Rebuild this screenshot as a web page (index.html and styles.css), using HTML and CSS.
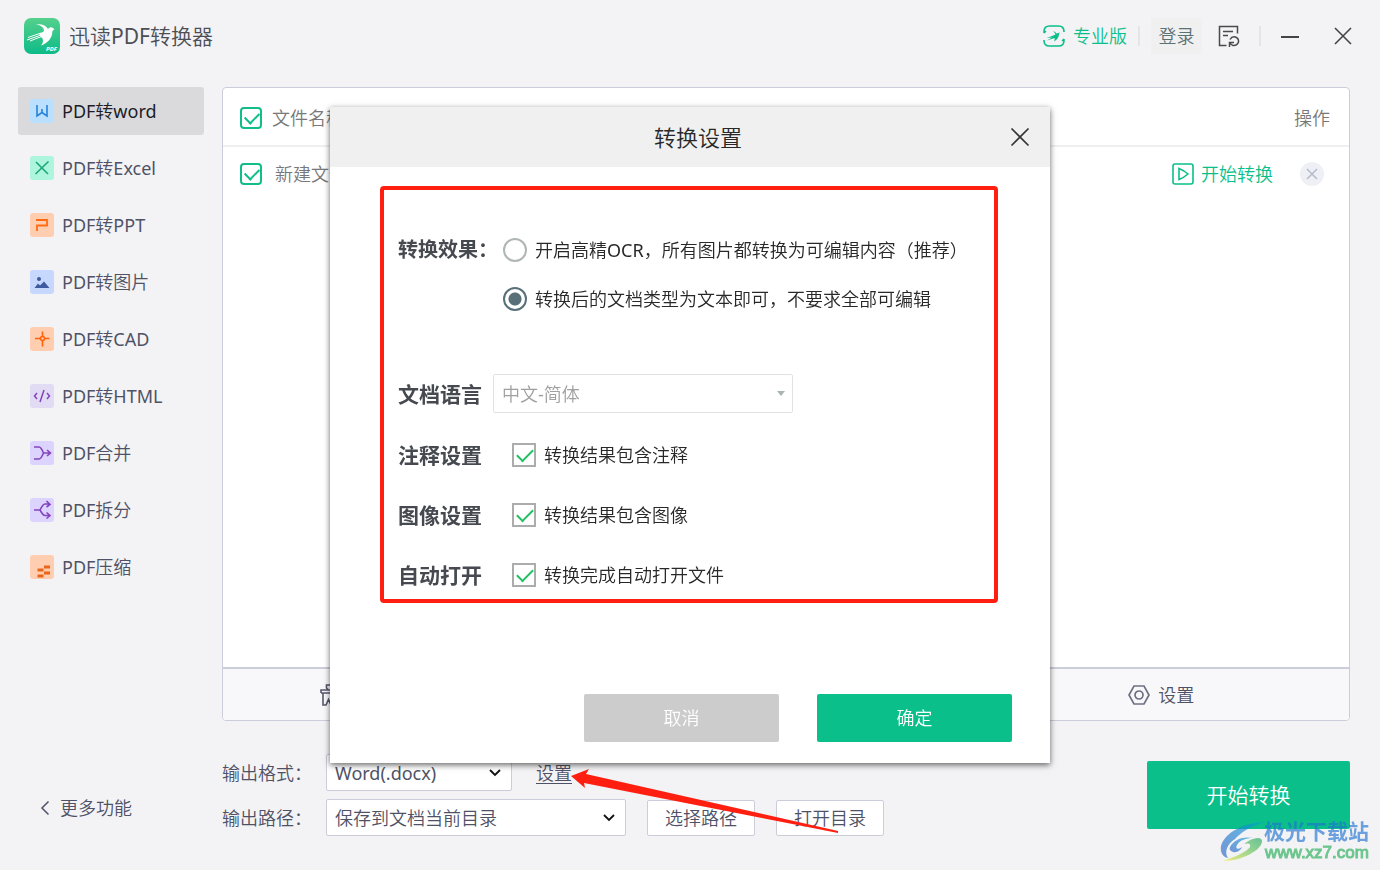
FILE: index.html
```html
<!DOCTYPE html>
<html lang="zh-CN">
<head>
<meta charset="utf-8">
<meta name="viewport" content="width=device-width, initial-scale=1">
<title>迅读PDF转换器</title>
<link rel="stylesheet" href="styles.css">
</head>
<body>
<div class="app">
  <header class="topbar">
    <svg class="logo" viewBox="0 0 36 36" aria-hidden="true">
      <defs><linearGradient id="lg" x1="0" y1="0" x2="0" y2="1"><stop offset="0" stop-color="#55d08c"/><stop offset="1" stop-color="#0dbb88"/></linearGradient></defs>
      <rect width="36" height="36" rx="7" fill="url(#lg)"/>
      <path fill="#fff" d="M12 6.500C17 5.500 22 7 24 11C26 8.500 28.500 9 30.500 11.500C28 12 28.500 14 28 16.500C27 21 23 25.500 17 27.500C19 25 19.500 23 18.500 20.500C16 18.500 15 17 15.500 15.500C17 14.500 18.500 14.500 20 13C20 9.500 17 7.200 12 6.500Z"/>
      <path fill="none" stroke="#fff" stroke-width="1" d="M17 15L4 19.500M17 17L3 22M17.500 18.500L6 23"/>
      <text x="22" y="33" class="logo-text">PDF</text>
    </svg>
    <h1 class="app-name">迅读PDF转换器</h1>
    <button class="pro" type="button">
      <svg width="22" height="22" viewBox="0 0 22 22" fill="none" stroke="#0abf8a" stroke-width="1.600" aria-hidden="true">
        <path d="M1 8V6.500Q1 1 6.500 1H15.500Q21 1 21 6.500V7M21 14V15.500Q21 21 15.500 21H6.500Q1 21 1 15.500V15M1 8L3 6M21 14L19 16"/>
        <path fill="#0abf8a" stroke="none" d="M10 6Q12.500 6.500 13.500 8.500L17 7.500L16 9Q16 13.500 11 16.500Q12 14.500 11.500 13L4 15.500L9 12.500L3.500 13L9 11L12.500 9.500Q12 7.500 10 6Z"/>
      </svg>
      专业版
    </button>
    <span class="divider divider-first"></span>
    <button class="login" type="button">登录</button>
    <button class="icon-button history" type="button" aria-label="转换记录">
      <svg width="24" height="24" viewBox="0 0 24 24" fill="none" stroke="#4a4a4a" stroke-width="1.500" aria-hidden="true">
        <path d="M9.500 21.500H2.500V2.500H20.500V9.500M6 7.500H16M6 11.500H11"/>
        <path d="M13 15.500Q15 12 18.500 13Q22 14.500 21.500 18Q20 22 16 21.500L13 19.500M17 18.500H12.500V23"/>
      </svg>
    </button>
    <span class="divider divider-last"></span>
    <button class="icon-button window-button" type="button" aria-label="最小化">
      <svg width="20" height="20" viewBox="0 0 20 20" stroke="#444" stroke-width="2" aria-hidden="true"><path d="M1 11H19"/></svg>
    </button>
    <button class="icon-button window-button close-app" type="button" aria-label="关闭">
      <svg width="20" height="20" viewBox="0 0 20 20" stroke="#444" stroke-width="1.600" aria-hidden="true"><path d="M2 2L18 18M18 2L2 18"/></svg>
    </button>
  </header>

  <div class="body">
    <nav class="sidebar">
      <a class="nav-item active" href="#word">
        <svg class="nav-icon" viewBox="0 0 24 24" aria-hidden="true"><rect width="24" height="24" rx="3" fill="#bbdfff"/><path d="M7 6V17L12 13.500L17 17V6M12 10V13" fill="none" stroke="#2683d9" stroke-width="1.600"/></svg>
        PDF转word
      </a>
      <a class="nav-item" href="#excel">
        <svg class="nav-icon" viewBox="0 0 24 24" aria-hidden="true"><rect width="24" height="24" rx="3" fill="#aef5dd"/><path d="M6 6L18 18M18.500 5.500L5.500 18" fill="none" stroke="#1aa876" stroke-width="1.600"/></svg>
        PDF转Excel
      </a>
      <a class="nav-item" href="#ppt">
        <svg class="nav-icon" viewBox="0 0 24 24" aria-hidden="true"><rect width="24" height="24" rx="3" fill="#ffceb0"/><path d="M6 7H17V12.500H7V18" fill="none" stroke="#ff6a13" stroke-width="1.800"/></svg>
        PDF转PPT
      </a>
      <a class="nav-item" href="#image">
        <svg class="nav-icon" viewBox="0 0 24 24" aria-hidden="true"><rect width="24" height="24" rx="3" fill="#c7d8ff"/><path d="M4.500 18L8 13.500L10 15.500L14 11.500L19.500 18Z" fill="#3e5ba0"/><circle cx="9" cy="9" r="2" fill="#3e5ba0"/></svg>
        PDF转图片
      </a>
      <a class="nav-item" href="#cad">
        <svg class="nav-icon" viewBox="0 0 24 24" aria-hidden="true"><rect width="24" height="24" rx="3" fill="#ffceb0"/><path d="M5 11.500H10M15 11.500H19.500M12.500 4.500V9M12.500 14V19.500" fill="none" stroke="#ff6208" stroke-width="1.600"/><circle cx="12.500" cy="11.500" r="2" fill="none" stroke="#ff6208" stroke-width="1.600"/></svg>
        PDF转CAD
      </a>
      <a class="nav-item" href="#html">
        <svg class="nav-icon" viewBox="0 0 24 24" aria-hidden="true"><rect width="24" height="24" rx="3" fill="#e1dbf4"/><path d="M7 9L4.500 12L7 15M17 9L19.500 12L17 15M14 6L10 18" fill="none" stroke="#8345bd" stroke-width="1.500"/></svg>
        PDF转HTML
      </a>
      <a class="nav-item" href="#merge">
        <svg class="nav-icon" viewBox="0 0 24 24" aria-hidden="true"><rect width="24" height="24" rx="3" fill="#ddd3ff"/><path d="M4 6H9Q11 6 13.500 12Q11 18 9 18H4M13 12H20M17 9L20.500 12L17 15" fill="none" stroke="#8345bd" stroke-width="1.600"/></svg>
        PDF合并
      </a>
      <a class="nav-item" href="#split">
        <svg class="nav-icon" viewBox="0 0 24 24" aria-hidden="true"><rect width="24" height="24" rx="3" fill="#ddd3ff"/><path d="M4 12H10Q13 6 15 6H19M10 12Q13 17.500 15 17.500H19M16.500 3L20 6.500L16.500 9M16.500 14.500L20 17.500L16.500 20.500" fill="none" stroke="#8345bd" stroke-width="1.600"/></svg>
        PDF拆分
      </a>
      <a class="nav-item" href="#compress">
        <svg class="nav-icon" viewBox="0 0 24 24" aria-hidden="true"><rect width="24" height="24" rx="3" fill="#ffceb0"/><path d="M14 10.500H20V13.500H14ZM7.500 13.500H13.500V16.500H7.500ZM14 16.500H20V19.500H14ZM7.500 19.500H13.500V22.500H7.500Z" fill="#e8661b"/></svg>
        PDF压缩
      </a>
      <a class="more" href="#more">
        <svg width="10" height="16" viewBox="0 0 10 16" fill="none" stroke="#55586c" stroke-width="1.600" aria-hidden="true"><path d="M8.500 1.500L2 8L8.500 14.500"/></svg>
        更多功能
      </a>
    </nav>

    <main class="content">
      <section class="panel">
        <div class="file-area">
          <table class="files">
            <thead>
              <tr>
                <th class="col-check"><input class="file-check" type="checkbox" checked aria-label="全选"></th>
                <th class="col-name">文件名称</th>
                <th class="col-action">操作</th>
              </tr>
            </thead>
            <tbody>
              <tr>
                <td class="col-check"><input class="file-check" type="checkbox" checked aria-label="选择文件"></td>
                <td class="col-name file-name">新建文件</td>
                <td class="col-action">
                  <div class="actions">
                    <button class="convert-link" type="button">
                      <svg width="22" height="22" viewBox="0 0 22 22" fill="none" stroke="#0abf8a" stroke-width="1.600" aria-hidden="true"><rect x="1" y="1" width="20" height="20" rx="2"/><path d="M7 5.500V16.500Q12 14.500 16 11Q12 7.500 7 5.500Z"/></svg>
                      开始转换
                    </button>
                    <button class="remove" type="button" aria-label="移除">
                      <svg width="12" height="12" viewBox="0 0 12 12" stroke="#b4bccb" stroke-width="1.500" aria-hidden="true"><path d="M1 1L11 11M11 1L1 11"/></svg>
                    </button>
                  </div>
                </td>
              </tr>
            </tbody>
          </table>
        </div>
        <div class="toolbar">
          <button class="tool tool-clear" type="button" aria-label="清空列表">
            <svg width="22" height="22" viewBox="0 0 22 22" fill="none" stroke="#55586c" stroke-width="1.600" aria-hidden="true"><path d="M8 5.500L6.500 4V1H15.500V4L14 5.500M1 9V6H21V9H1M3 9V21H6L8.500 15.500L11 21H19V9"/></svg>
          </button>
          <button class="tool tool-settings" type="button">
            <svg width="22" height="22" viewBox="0 0 22 22" fill="none" stroke="#6d7082" stroke-width="1.700" aria-hidden="true"><path d="M6 2H16L21 11L16 20H6L1 11Z"/><circle cx="11" cy="11" r="4"/></svg>
            设置
          </button>
        </div>
      </section>

      <form class="output">
        <div class="output-fields">
          <div class="field">
            <label class="field-label" for="format">输出格式：</label>
            <span class="select-wrap format-wrap">
              <select class="select" id="format"><option>Word(.docx)</option></select>
              <svg class="chevron" viewBox="0 0 12 8" fill="none" stroke="#111" stroke-width="1.800" aria-hidden="true"><path d="M1 1L6 6L11 1"/></svg>
            </span>
            <span class="settings-spot">
              <a class="settings-link" href="#settings">设置</a>
              <svg class="arrow" width="268" height="66" viewBox="0 0 268 66" aria-hidden="true"><path fill="#ff1f10" d="M0 8L18 1L15 6L267 63V65L13 15L14 20Z"/></svg>
            </span>
          </div>
          <div class="field">
            <label class="field-label" for="path">输出路径：</label>
            <span class="select-wrap path-wrap">
              <select class="select" id="path"><option>保存到文档当前目录</option></select>
              <svg class="chevron" viewBox="0 0 12 8" fill="none" stroke="#111" stroke-width="1.800" aria-hidden="true"><path d="M1 1L6 6L11 1"/></svg>
            </span>
            <button class="path-button" type="button">选择路径</button>
            <button class="path-button" type="button">打开目录</button>
          </div>
        </div>
        <button class="start" type="button">开始转换</button>
      </form>
    </main>
  </div>
</div>

<div class="overlay">
  <section class="dialog" role="dialog" aria-labelledby="dialog-title">
    <header class="dialog-head">
      <h2 class="dialog-title" id="dialog-title">转换设置</h2>
      <button class="icon-button dialog-close" type="button" aria-label="关闭">
        <svg width="20" height="20" viewBox="0 0 20 20" stroke="#333" stroke-width="1.700" aria-hidden="true"><path d="M1.500 1.500L18.500 18.500M18.500 1.500L1.500 18.500"/></svg>
      </button>
    </header>
    <div class="settings">
      <div class="setting effect" role="radiogroup" aria-labelledby="effect-label">
        <span class="effect-label" id="effect-label">转换效果：</span>
        <div class="radios">
          <label class="choice"><input class="radio" type="radio" name="effect">开启高精OCR，所有图片都转换为可编辑内容（推荐）</label>
          <label class="choice"><input class="radio" type="radio" name="effect" checked>转换后的文档类型为文本即可，不要求全部可编辑</label>
        </div>
      </div>
      <div class="setting language">
        <label class="setting-label" for="language">文档语言</label>
        <span class="select-wrap language-wrap">
          <select class="select language-select" id="language" disabled><option>中文-简体</option></select>
          <svg class="caret" viewBox="0 0 8 5" aria-hidden="true"><path d="M0 0H8L4 5Z" fill="#a9b5b5"/></svg>
        </span>
      </div>
      <div class="checks">
        <div class="setting check-row">
          <span class="setting-label">注释设置</span>
          <label class="choice"><input class="check" type="checkbox" checked>转换结果包含注释</label>
        </div>
        <div class="setting check-row">
          <span class="setting-label">图像设置</span>
          <label class="choice"><input class="check" type="checkbox" checked>转换结果包含图像</label>
        </div>
        <div class="setting check-row">
          <span class="setting-label">自动打开</span>
          <label class="choice"><input class="check" type="checkbox" checked>转换完成自动打开文件</label>
        </div>
      </div>
    </div>
    <footer class="dialog-foot">
      <button class="dialog-button cancel" type="button">取消</button>
      <button class="dialog-button confirm" type="button">确定</button>
    </footer>
  </section>
</div>

<div class="watermark">
  <svg width="44" height="42" viewBox="0 0 44 42" aria-hidden="true">
    <defs>
      <linearGradient id="wb" x1="0" y1="1" x2="1" y2="0"><stop offset="0" stop-color="#2f62c4"/><stop offset="1" stop-color="#0b9fd8"/></linearGradient>
      <linearGradient id="wg" x1="0" y1="1" x2="1" y2="0"><stop offset="0" stop-color="#f2e93a"/><stop offset=".6" stop-color="#5fc05a"/><stop offset="1" stop-color="#1fa860"/></linearGradient>
    </defs>
    <path fill="url(#wb)" d="M44 1C24 2 5 11 1 25C0 32 3 36 8 37C4 31 7 23 15 18C20 12 31 5 44 1Z"/>
    <path fill="url(#wb)" d="M10 26C14 18 24 15 33 17C26 17 20 19 17 24C15 28 18 29 22 26C21 29 17 32 13 31C10 30 9 28 10 26Z"/>
    <path fill="url(#wg)" d="M24 23C32 16 42 15 42 20C42 29 22 40 3 40C14 36 27 31 30 26C31 22 28 22 24 23Z"/>
  </svg>
  <div class="watermark-text">
    <span class="watermark-name">极光下载站</span>
    <span class="watermark-url">www.xz7.com</span>
  </div>
</div>
</body>
</html>
```

FILE: styles.css
```css
* { box-sizing: border-box; }

body {
  margin: 0;
  background: #f3f3f5;
  color: #4f5266;
  font: 400 18px/24px "Noto Sans", "Noto Sans CJK SC DemiLight", "Noto Sans CJK SC", sans-serif;
}

button, select, input { font: inherit; color: inherit; margin: 0; }
button { border: 0; padding: 0; background: none; cursor: pointer; white-space: nowrap; }
a { color: inherit; text-decoration: none; }
h1, h2 { margin: 0; font-weight: inherit; }
svg { display: block; flex: none; }

.app { display: flex; flex-direction: column; min-height: 100vh; }

/* Top bar */
.topbar { display: flex; align-items: center; height: 72px; padding: 0 20px 0 24px; }
.logo { width: 36px; height: 36px; }
.logo-text { font: italic bold 6px "Open Sans", sans-serif; fill: #fff; }
.app-name { margin-left: 9px; margin-right: auto; font-size: 21px; color: #4c4f55; }
.pro { display: flex; align-items: center; gap: 8px; color: #0abf8a; }
.divider { width: 2px; height: 20px; background: #e5e5e9; }
.divider-first { margin: 0 11px; }
.divider-last { margin: 0 12px 0 18px; }
.login { width: 51px; height: 36px; background: #f0f0f1; color: #5a7176; }
.icon-button { display: flex; align-items: center; justify-content: center; }
.history { margin-left: 15px; }
.window-button { width: 34px; height: 34px; }
.close-app { margin-left: 19px; }

/* Sidebar */
.body { display: flex; flex: 1; gap: 18px; padding: 15px 30px 34px 18px; }
.sidebar { display: flex; flex-direction: column; flex: none; gap: 9px; width: 186px; }
.nav-item { display: flex; align-items: center; gap: 8px; height: 48px; padding: 0 12px; border-radius: 3px; }
.nav-item.active { background: #dadadc; color: #1c1d28; }
.nav-icon { width: 24px; height: 24px; }
.more { display: flex; align-items: center; gap: 10px; height: 36px; margin: auto 0 10px; padding-left: 22px; }

/* File panel */
.content { display: flex; flex: 1; flex-direction: column; min-width: 0; }
.panel { display: flex; flex: 1; flex-direction: column; border: 1px solid #cccdda; border-radius: 4px; background: #fff; overflow: hidden; }
.file-area { flex: 1; }
.files { width: 100%; border-collapse: separate; border-spacing: 0; color: #787878; }
.files th, .files td { padding: 0; font-weight: inherit; text-align: left; }
.files th { height: 59px; padding-top: 2px; border-bottom: 2px solid #efeff1; }
.files td { height: 54px; }
.files .col-check { width: 49px; padding-left: 17px; }
.files .file-name { padding-left: 3px; }
.files .col-action { padding-right: 19px; text-align: right; }
.files td.col-action { padding-right: 25px; }
.file-check { display: block; appearance: none; width: 22px; height: 22px; border: 2px solid #10bd8b; border-radius: 4px; }
.file-check::after { content: ""; display: block; width: 12px; height: 7px; margin: 3px; border: solid #10bd8b; border-width: 0 0 2px 2px; transform: rotate(-45deg); }
.actions { display: flex; align-items: center; justify-content: flex-end; gap: 27px; }
.convert-link { display: flex; align-items: center; gap: 7px; color: #0abf8a; }
.remove { display: flex; align-items: center; justify-content: center; width: 24px; height: 24px; border-radius: 50%; background: #eff0f5; }

.toolbar { display: grid; grid-template-columns: repeat(3, 1fr); height: 53px; border-top: 2px solid #cccdda; background: #f8f8fa; }
.tool { display: flex; align-items: center; justify-content: center; gap: 8px; }
.tool-clear { justify-content: flex-start; padding-left: 97px; }
.tool-settings { grid-column: 3; }

/* Output options */
.output { display: flex; align-items: center; justify-content: space-between; margin-top: 33px; }
.output-fields { display: flex; flex-direction: column; gap: 8px; }
.field { display: flex; align-items: center; }
.field-label { width: 104px; }
.select-wrap { position: relative; display: block; }
.select { appearance: none; display: block; width: 100%; height: 37px; padding: 0 30px 0 8px; border: 1px solid #cccdda; border-radius: 2px; background: #fff; }
.format-wrap { width: 186px; }
.path-wrap { width: 300px; }
.chevron { position: absolute; right: 11px; top: 15px; width: 12px; height: 8px; pointer-events: none; }
.settings-spot { position: relative; margin-left: 24px; }
.settings-link { text-decoration: underline; text-underline-offset: 3px; }
.arrow { position: absolute; left: 35px; top: 7px; z-index: 20; pointer-events: none; }
.path-button { width: 108px; height: 36px; margin-left: 21px; border: 1px solid #cccdda; border-radius: 2px; background: #fff; }
.start { width: 203px; height: 68px; border-radius: 2px; background: #0abf8a; color: #fff; font-size: 21px; }

/* Settings dialog */
.overlay { position: fixed; inset: 0; z-index: 10; display: flex; align-items: center; justify-content: center; pointer-events: none; }
.dialog { display: flex; flex-direction: column; width: 720px; min-height: 656px; background: #fff; box-shadow: 0 2px 6px rgba(0, 0, 0, .6); color: #282828; pointer-events: auto; }
.dialog-head { display: flex; align-items: center; height: 60px; padding: 0 14px 0 62px; background: #f0f0f0; }
.dialog-title { flex: 1; font-size: 22px; text-align: center; }
.dialog-close { width: 32px; height: 32px; }
.settings { margin: 19px 52px 0 50px; padding: 48px 14px 12px; border: 4px solid #ff1f10; border-radius: 4px; }
.setting { display: flex; align-items: center; }
.effect { align-items: flex-start; }
.effect-label, .setting-label { font-family: "Noto Sans", "Noto Sans CJK SC", sans-serif; font-weight: 700; color: #464a50; white-space: nowrap; }
.effect-label { width: 105px; font-size: 20px; }
.radios { display: flex; flex-direction: column; gap: 25px; }
.choice { display: flex; align-items: center; gap: 8px; white-space: nowrap; }
.radio { flex: none; appearance: none; width: 24px; height: 24px; border: 2px solid #b0b5b5; border-radius: 50%; background: #fff; }
.radio:checked { border-color: #587078; background: radial-gradient(circle, #587078 6px, #fff 7px); }
.language { margin-top: 63px; }
.setting-label { width: 95px; font-size: 21px; }
.language-wrap { width: 300px; }
.language-select { height: 39px; border-color: #e2e2e2; color: #a0a0a0; opacity: 1; }
.caret { position: absolute; right: 8px; top: 17px; width: 8px; height: 5px; }
.checks { display: flex; flex-direction: column; gap: 36px; margin-top: 30px; }
.check-row .setting-label { width: 114px; }
.check { flex: none; appearance: none; width: 24px; height: 24px; border: 2px solid #acacac; background: #fff; }
.check::after { content: ""; display: block; width: 14px; height: 7px; margin: 4px 3px; border: solid #22bf62; border-width: 0 0 2px 2px; transform: rotate(-45deg); }
.dialog-foot { display: flex; justify-content: flex-end; gap: 38px; margin-top: auto; padding: 0 38px 21px; }
.dialog-button { width: 195px; height: 48px; border-radius: 2px; color: #fff; }
.cancel { background: #ccc; }
.confirm { background: #0abf8a; }

/* Site mark in the corner */
.watermark { position: fixed; right: 11px; bottom: 7px; z-index: 30; display: flex; align-items: center; opacity: .65; pointer-events: none; }
.watermark-text { display: flex; flex-direction: column; font-family: "Noto Sans", "Noto Sans CJK SC", sans-serif; font-weight: 700; white-space: nowrap; }
.watermark-name { font-size: 21px; line-height: 23px; color: #1f74d0; }
.watermark-url { padding-left: 1px; font: 17px/20px "Liberation Sans", sans-serif; color: #23ad55; -webkit-text-stroke: 1px #23ad55; }
```
